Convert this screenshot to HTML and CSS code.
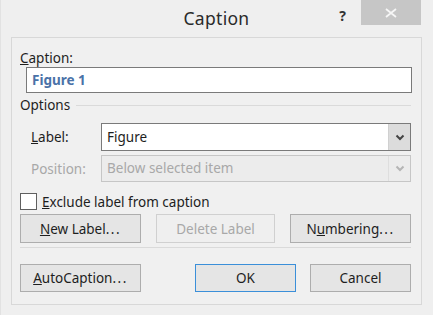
FILE: index.html
```html
<!DOCTYPE html>
<html>
<head>
<meta charset="utf-8">
<link rel="stylesheet" href="styles.css">
</head>
<body>
<div class="window">
  <div class="titlebar">
    <div></div>
    <div class="title">Caption</div>
    <div class="controls">
      <span class="help">?</span>
      <span class="close">
        <svg width="14" height="10" viewBox="0 0 14 10"><path d="M2 1 L12 9 M12 1 L2 9" stroke="#f6f6f6" stroke-width="1.8"/></svg>
      </span>
    </div>
  </div>
  <div class="panel">
    <div class="lbl"><u>C</u>aption:</div>
    <div class="textbox">Figure 1</div>
    <div class="group">
      <span>Options</span><span class="rule"></span>
    </div>
    <div class="row">
      <span class="rowlbl"><u>L</u>abel:</span>
      <div class="combo">
        <span class="val">Figure</span>
        <span class="arrow"><svg width="10" height="7" viewBox="0 0 10 7"><path d="M1.5 1.5 L5 5 L8.5 1.5" fill="none" stroke="#444" stroke-width="2"/></svg></span>
      </div>
    </div>
    <div class="row disabled">
      <span class="rowlbl">Position:</span>
      <div class="combo off">
        <span class="val">Below selected item</span>
        <span class="arrow"><svg width="10" height="7" viewBox="0 0 10 7"><path d="M1.5 1.5 L5 5 L8.5 1.5" fill="none" stroke="#b5b5b5" stroke-width="2"/></svg></span>
      </div>
    </div>
    <div class="check">
      <span class="box"></span><span><u>E</u>xclude label from caption</span>
    </div>
    <div class="buttons three">
      <button class="btn"><u>N</u>ew Label<span class="dots">...</span></button>
      <button class="btn dis">Delete Label</button>
      <button class="btn">N<u>u</u>mbering<span class="dots">...</span></button>
    </div>
    <div class="sep"></div>
    <div class="buttons bottom">
      <button class="btn"><u>A</u>utoCaption<span class="dots">...</span></button>
      <span class="spacer"></span>
      <button class="btn ok">OK</button>
      <button class="btn">Cancel</button>
    </div>
  </div>
</div>
</body>
</html>
```
FILE: styles.css
```css
html, body { margin: 0; padding: 0; }
body {
  width: 433px;
  height: 315px;
  background: #eeeeee;
  font-family: "Noto Sans", "Open Sans", sans-serif;
  font-size: 13.5px;
  color: #1e1e1e;
  overflow: hidden;
}
.window {
  box-sizing: border-box;
  width: 433px;
  height: 315px;
  padding: 0 11px 0 10px;
  border-left: 1px solid #e2e2e2;
  background: #efefef;
}
.titlebar {
  display: grid;
  grid-template-columns: 1fr auto 1fr;
  height: 37px;
  align-items: start;
}
.title {
  font-size: 17.5px;
  color: #2a2a2a;
  padding-top: 6px;
  letter-spacing: 0.3px;
}
.controls {
  display: flex;
  justify-content: flex-end;
  align-items: flex-start;
  margin-right: -11px;
}
.help {
  font-weight: bold;
  font-size: 14px;
  color: #333;
  margin-top: 6px;
  margin-right: 15px;
}
.close {
  width: 60px;
  height: 25px;
  background: #c6c6c6;
  display: flex;
  align-items: center;
  justify-content: center;
  margin-right: 12px;
}
.panel {
  box-sizing: border-box;
  height: 268px;
  border: 1px solid #d8d8d8;
  background: #f0f0f0;
  padding: 11px 10px 0 8px;
  display: flex;
  flex-direction: column;
}
.lbl { line-height: 18px; height: 18px; }
.textbox {
  margin-left: 6px;
  margin-right: -1px;
  height: 26px;
  box-sizing: border-box;
  border: 1px solid #7a7a7a;
  background: #fff;
  padding-left: 5px;
  line-height: 24px;
  font-weight: bold;
  color: #4a72a8;
}
.group {
  display: flex;
  align-items: center;
  height: 22px;
  margin-top: 1px;
}
.rule {
  flex: 1;
  height: 0;
  border-top: 1px solid #dadada;
  margin-left: 6px;
}
.row {
  display: flex;
  align-items: center;
  margin-top: 7px;
}
.row.disabled { margin-top: 4px; color: #a8a8a8; }
.rowlbl { width: 70px; padding-left: 11px; }
.combo {
  flex: 1;
  display: flex;
  height: 28px;
  box-sizing: border-box;
  border: 1px solid #7a7a7a;
  background: #fff;
}
.combo .val { flex: 1; padding-left: 5px; line-height: 26px; }
.combo .arrow {
  width: 21px;
  border-left: 1px solid #d0d0d0;
  background: #dcdcdc;
  display: flex;
  align-items: center;
  justify-content: center;
}
.combo.off { border-color: #c6c6c6; background: #ececec; height: 27px; }
.combo.off .val { line-height: 25px; }
.combo.off .arrow { background: #ececec; border-left-color: #dedede; }
.check {
  display: flex;
  align-items: center;
  margin-top: 11px;
  height: 17px;
}
.box {
  width: 15px;
  height: 15px;
  border: 1px solid #5f5f5f;
  background: #fff;
  margin-right: 5px;
}
.buttons { display: flex; }
.buttons.three {
  margin-top: 4px;
  justify-content: space-between;
}
.btn {
  font-family: inherit;
  font-size: 13.5px;
  color: #1e1e1e;
  width: 121px;
  height: 29px;
  box-sizing: border-box;
  border: 1px solid #adadad;
  background: #e5e5e5;
  padding: 0;
  margin: 0;
}
.dots { letter-spacing: 1.5px; }
.btn.dis { color: #a8a8a8; border-color: #d0d0d0; background: #efefef; width: 119px; }
.sep {
  border-top: 1px solid #dadada;
  margin-top: 4px;
}
.buttons.bottom { margin-top: 16px; }
.buttons.bottom .btn { height: 28px; }
.spacer { flex: 1; }
.btn.ok {
  width: 101px;
  border-color: #3b8fd9;
  margin-right: 14px;
}
.buttons.bottom .btn:last-child { width: 101px; }
```
